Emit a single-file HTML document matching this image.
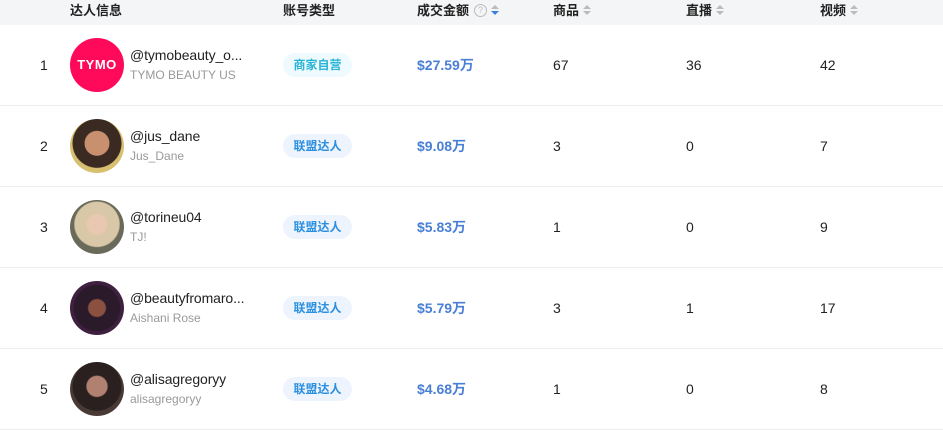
<!DOCTYPE html>
<html><head><meta charset="utf-8"><style>
*{margin:0;padding:0;box-sizing:border-box}
body{width:943px;height:426px;background:#fff;font-family:"Liberation Sans","Noto Sans CJK SC",sans-serif;overflow:hidden;position:relative;color:#222}
.hd{position:absolute;left:0;top:0;width:943px;height:25px;background:#f4f5f7}
.h{position:absolute;top:3px;font-size:13px;font-weight:bold;color:#222;line-height:16px}
.s{display:inline-block;vertical-align:middle;margin-left:4px;width:8px;height:12px;position:relative;top:-1px}
.s:before{content:"";position:absolute;left:0;top:0;border:4px solid transparent;border-bottom:4.5px solid #bbb;border-top:0}
.s:after{content:"";position:absolute;left:0;top:6px;border:4px solid transparent;border-top:4.5px solid #bbb;border-bottom:0}
.s.b:after{border-top-color:#3d7fe0}
.q{display:inline-block;width:13px;height:13px;border:1px solid #bbb;border-radius:50%;font-size:9px;color:#bbb;text-align:center;line-height:11px;vertical-align:middle;margin-left:5px;font-weight:normal;position:relative;top:-1px}
.row{position:absolute;left:0;width:943px;height:81px;border-bottom:1px solid #ececec}
.c{position:absolute;top:0;height:80px;line-height:80px;font-size:14px;color:#222}
.av{position:absolute;left:70px;top:13px;width:54px;height:54px;border-radius:50%;overflow:hidden}
.nm{position:absolute;left:130px;top:21px;font-size:14px;color:#222;line-height:18px;letter-spacing:-0.1px}
.sub{position:absolute;left:130px;top:42px;font-size:12px;color:#999;line-height:16px}
.bd{position:absolute;left:283px;top:28px;width:69px;height:24px;border-radius:12px;background:#edf4fd;color:#2b8fe0;font-size:12px;font-weight:bold;text-align:center;line-height:24px}
.amt{position:absolute;left:417px;top:0;line-height:80px;font-size:14px;font-weight:bold;color:#4a7fd6}
</style></head><body>
<div class="hd"></div>
<div class="h" style="left:70px">达人信息</div>
<div class="h" style="left:283px">账号类型</div>
<div class="h" style="left:417px">成交金额<span class="q">?</span><span class="s b"></span></div>
<div class="h" style="left:553px">商品<span class="s"></span></div>
<div class="h" style="left:686px">直播<span class="s"></span></div>
<div class="h" style="left:820px">视频<span class="s"></span></div>

<div class="row" style="top:25px">
<div class="c" style="left:40px">1</div>
<div class="av" style="background:#ff0a5a;color:#fff;font-weight:bold;font-size:13px;text-align:center;line-height:54px;letter-spacing:0.5px">TYMO</div>
<div class="nm">@tymobeauty_o...</div><div class="sub">TYMO BEAUTY US</div>
<div class="bd" style="background:#eefafd;color:#28b4d6">商家自营</div>
<div class="amt">$27.59万</div>
<div class="c" style="left:553px">67</div><div class="c" style="left:686px">36</div><div class="c" style="left:820px">42</div>
</div>

<div class="row" style="top:106px">
<div class="c" style="left:40px">2</div>
<div class="av" style="background:radial-gradient(circle at 50% 45%,#c99070 0 30%,#3a2a22 32% 60%,#d8c070 62%)"></div>
<div class="nm">@jus_dane</div><div class="sub">Jus_Dane</div>
<div class="bd">联盟达人</div><div class="amt">$9.08万</div>
<div class="c" style="left:553px">3</div><div class="c" style="left:686px">0</div><div class="c" style="left:820px">7</div>
</div>

<div class="row" style="top:187px">
<div class="c" style="left:40px">3</div>
<div class="av" style="background:radial-gradient(circle at 50% 45%,#e8c8b0 0 25%,#d8c8a8 27% 55%,#6a6a5a 58%)"></div>
<div class="nm">@torineu04</div><div class="sub">TJ!</div>
<div class="bd">联盟达人</div><div class="amt">$5.83万</div>
<div class="c" style="left:553px">1</div><div class="c" style="left:686px">0</div><div class="c" style="left:820px">9</div>
</div>

<div class="row" style="top:268px">
<div class="c" style="left:40px">4</div>
<div class="av" style="background:radial-gradient(circle at 50% 50%,#8a5040 0 22%,#2a1a2a 25% 60%,#402040 62%)"></div>
<div class="nm">@beautyfromaro...</div><div class="sub">Aishani Rose</div>
<div class="bd">联盟达人</div><div class="amt">$5.79万</div>
<div class="c" style="left:553px">3</div><div class="c" style="left:686px">1</div><div class="c" style="left:820px">17</div>
</div>

<div class="row" style="top:349px">
<div class="c" style="left:40px">5</div>
<div class="av" style="background:radial-gradient(circle at 50% 45%,#b08070 0 25%,#2a2020 28% 60%,#4a3a36 62%)"></div>
<div class="nm">@alisagregoryy</div><div class="sub">alisagregoryy</div>
<div class="bd">联盟达人</div><div class="amt">$4.68万</div>
<div class="c" style="left:553px">1</div><div class="c" style="left:686px">0</div><div class="c" style="left:820px">8</div>
</div>
</body></html>
